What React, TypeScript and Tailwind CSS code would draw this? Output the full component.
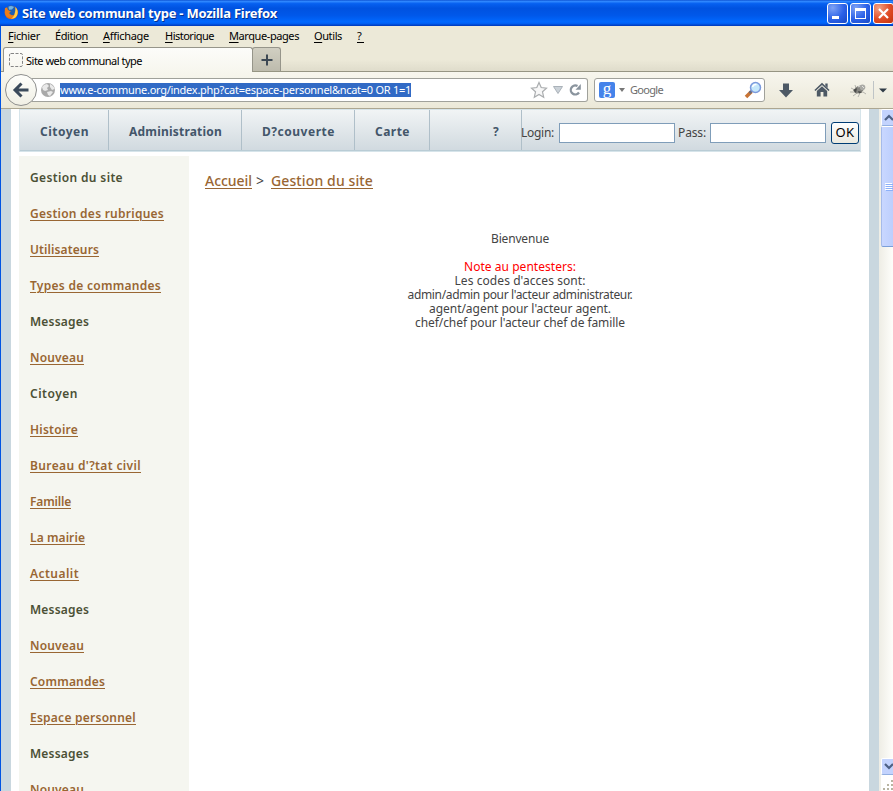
import { useLayoutEffect, useRef, useState, type ReactNode } from "react";

/* Spreads its letters so that the label takes exactly `w` pixels. */
function Fit({ w, className = "", children }: { w: number; className?: string; children: ReactNode }) {
  const ref = useRef<HTMLSpanElement>(null);
  const [spacing, setSpacing] = useState(0);
  useLayoutEffect(() => {
    const el = ref.current;
    if (!el) return;
    el.style.letterSpacing = "0px";
    const n = (el.textContent || "").length;
    const s = (w - el.getBoundingClientRect().width) / n;
    el.style.letterSpacing = s + "px";
    setSpacing(s);
  }, [w]);
  return (
    <span ref={ref} className={"inline-block shrink-0 whitespace-pre " + className} style={{ letterSpacing: spacing }}>
      {children}
    </span>
  );
}

const side: [string, number, boolean][] = [
  ["Gestion du site", 93, false],
  ["Gestion des rubriques", 134, true],
  ["Utilisateurs", 69, true],
  ["Types de commandes", 131, true],
  ["Messages", 59, false],
  ["Nouveau", 54, true],
  ["Citoyen", 48, false],
  ["Histoire", 48, true],
  ["Bureau d'?tat civil", 111, true],
  ["Famille", 41, true],
  ["La mairie", 55, true],
  ["Actualit", 49, true],
  ["Messages", 59, false],
  ["Nouveau", 54, true],
  ["Commandes", 75, true],
  ["Espace personnel", 106, true],
  ["Messages", 59, false],
  ["Nouveau", 54, true],
];

const menus: [string, string, string, number, string][] = [
  ["", "F", "ichier", 32, "ml-[7px]"],
  ["Éditio", "n", "", 33, "ml-[15px]"],
  ["", "A", "ffichage", 46, "ml-[15px]"],
  ["", "H", "istorique", 49, "ml-[16px]"],
  ["", "M", "arque-pages", 70, "ml-[15px]"],
  ["", "O", "utils", 28, "ml-[15px]"],
  ["", "?", "", 7, "ml-[15px]"],
];

function TitleBar() {
  return (
    <header className="flex h-[26px] shrink-0 items-center bg-[linear-gradient(180deg,#0b4fd0_0%,#3189ff_5%,#0660f0_14%,#0052e0_32%,#0058ea_60%,#0068ff_84%,#0060f4_90%,#0037b8_100%)] pl-[4px]">
      <svg width="15" height="16" viewBox="0 0 15 16">
        <circle cx="7.3" cy="7.500" r="6.7" fill="#e06a10" />
        <circle cx="7" cy="5.600" r="5" fill="#1f5fb4" />
        <path d="M4.500 1.800Q7 .3 10 2L8 4.500l-3 .3z" fill="#6fb4e4" />
        <path d="M1 3Q.2 8 2.500 11.500q5 3.500 9.500-1.500Q8.500 11 6.500 9.500L5 8 7 6.500 4 5 3 2.500Z" fill="#ee7d18" />
        <path d="M11.500 2Q15 6 13 10.500 11 14 7 13.800 11.500 11.500 11.500 2" fill="#ffcf4a" />
      </svg>
      <Fit w={255} className="ml-[3px] font-['Noto_Sans'] text-[13px] leading-[26px] font-bold text-white [text-shadow:1px_1px_0_#06318d]">Site web communal type - Mozilla Firefox</Fit>
      <div className="ml-auto flex gap-[2px]">
        <span className="flex size-[21px] items-end rounded-[3px] border border-white bg-[radial-gradient(circle_at_25%_20%,#7da2f5,#2b61e8_55%,#1849c4)] p-1"><i className="h-[3px] w-[7px] bg-white" /></span>
        <span className="flex size-[21px] items-center justify-center rounded-[3px] border border-white bg-[radial-gradient(circle_at_25%_20%,#7da2f5,#2b61e8_55%,#1849c4)]"><i className="h-[11px] w-[11px] border border-t-[3px] border-white" /></span>
        <span className="mr-[-1px] flex size-[21px] items-center justify-center rounded-[3px] border border-white bg-[radial-gradient(circle_at_25%_20%,#f3a083,#e04c26_55%,#c1330d)]">
          <svg width="13" height="13" viewBox="0 0 13 13"><path d="M2 2l9 9M11 2l-9 9" stroke="#fff" strokeWidth="2.200" /></svg>
        </span>
      </div>
    </header>
  );
}

function Toolbar() {
  return (
    <div className="flex h-[37px] shrink-0 items-center border-b border-[#aca691] bg-[linear-gradient(180deg,#f7f6ee,#ebe8d8)]">
      <div className="z-10 ml-[4px] flex size-[32px] shrink-0 items-center justify-center rounded-full border border-[#8e8f8e] bg-[linear-gradient(180deg,#fefefb,#f0efe5)]">
        <svg width="18" height="18" viewBox="0 0 18 18"><path d="M9.500 2.500L3 9l6.500 6.500M3.500 9H16.500" fill="none" stroke="#3b4a5b" strokeWidth="3" /></svg>
      </div>
      <div className="-ml-[5px] flex h-[24px] w-[556px] shrink-0 items-center rounded-r-[3px] border border-l-0 border-[#a0a19b] bg-white pl-[8px]">
        <svg width="16" height="16" viewBox="0 0 16 16">
          <circle cx="8" cy="8" r="7" fill="#a9a9a9" />
          <path d="M2 5Q4 2 7 2L9 4 7 6 8 8 5 9 3 8zM10 2q4 2 4.500 5L12 8l-2-3zM7 10l4-1 2 1-3 4-2-1z" fill="#e9e9e9" />
        </svg>
        <span className="ml-[4px] flex h-[14px] items-center bg-[#316ac5] text-white">
          <Fit w={351} className="text-[11px] leading-[14px]">www.e-commune.org/index.php?cat=espace-personnel&amp;ncat=0 OR 1=1</Fit>
        </span>
        <svg className="ml-[119px] shrink-0" width="18" height="18" viewBox="0 0 18 18"><path d="M9 1.500l2.200 5 5.300.6-4 3.700 1.200 5.400L9 13.500l-4.700 2.700 1.200-5.400-4-3.700 5.300-.6z" fill="#f7f7f7" stroke="#a9acae" strokeWidth="1.200" /></svg>
        <svg className="ml-[5px] shrink-0" width="10" height="8" viewBox="0 0 10 8"><path d="M.5.500h9L5 7.500z" fill="#cbd2d8" stroke="#aab2b9" /></svg>
        <svg className="ml-[5px] shrink-0" width="14" height="14" viewBox="0 0 14 14"><path d="M9.500 3A4.500 4.500 0 1 0 11 9.500" fill="none" stroke="#8a949e" strokeWidth="2.300" /><path d="M7.500 6.800h5.300V1z" fill="#8a949e" /></svg>
      </div>
      <div className="ml-[6px] flex h-[24px] w-[171px] shrink-0 items-center rounded-[3px] border border-[#a0a19b] bg-white pl-[4px]">
        <span className="flex size-[16px] items-center justify-center rounded-[2px] bg-[#4583ea] pb-[4px] font-['Liberation_Serif'] text-[17px] leading-none text-white">g</span>
        <svg className="ml-[4px]" width="6" height="4" viewBox="0 0 6 4"><path d="M0 0h6L3 4z" fill="#777" /></svg>
        <Fit w={33} className="ml-[5px] pt-px text-[11px] text-[#6d6d6d]">Google</Fit>
        <svg className="ml-[81px] shrink-0" width="18" height="18" viewBox="0 0 18 18">
          <path d="M7.500 10.500L2 16" stroke="#c87435" strokeWidth="3.500" />
          <path d="M7.800 9.800L5.500 12" stroke="#626a83" strokeWidth="2.500" />
          <circle cx="11.500" cy="6.500" r="5" fill="#c5e8fb" stroke="#7c9bdd" strokeWidth="1.500" />
          <path d="M8.500 6q1-3 4-2.500" fill="none" stroke="#fff" strokeWidth="1.500" />
        </svg>
      </div>
      <svg className="ml-[14px] shrink-0" width="14" height="15" viewBox="0 0 14 15"><path d="M4 .500h6V7h4l-7 7.500L0 7h4z" fill="#4d5965" /></svg>
      <svg className="ml-[21px] shrink-0" width="16" height="16" viewBox="0 0 17 16"><path d="M1 8.500L8.500 1.500 16 8.500" fill="none" stroke="#4d5965" strokeWidth="1.700" /><path d="M12 1h2.500v5L12 3.500zM3 9l5.500-5L14 9v6h-4v-5H7v5H3z" fill="#4d5965" /></svg>
      <svg className="ml-[20px] shrink-0" width="17" height="15" viewBox="0 0 17 15">
        <path d="M1 5l4 2M0 9h5M3 13l4-3M8 14l2-4M13 9l3 2M6 5L5 2" stroke="#a5a49f" strokeWidth=".8" />
        <ellipse cx="9" cy="6.500" rx="5.500" ry="3.500" transform="rotate(-25 9 6.500)" fill="#858580" />
        <circle cx="12.500" cy="4.200" r="2.800" fill="#aaaaa5" />
        <path d="M3 7l4-2-1 5zM8 8l5 1-4 1.500z" fill="#4a4b49" />
        <path d="M8 4l2-1M12 3l2 2" stroke="#e1e1de" />
      </svg>
      <span className="ml-[6px] h-[18px] w-px shrink-0 bg-[#bfc4c6]" />
      <svg className="ml-[5px] shrink-0" width="8" height="5" viewBox="0 0 8 5"><path d="M0 .5h8L4 4.500z" fill="#2f3b46" /></svg>
    </div>
  );
}

function NavItem({ label, w, cls }: { label: string; w: number; cls: string }) {
  return (
    <div className={"flex h-full shrink-0 items-center border-r border-[#afbfc9] pt-[4px] " + cls}>
      <Fit w={w} className="font-['Noto_Sans'] text-[12px] font-bold text-[#43566a]">{label}</Fit>
    </div>
  );
}

function Scrollbar() {
  return (
    <aside className="flex w-[14px] shrink-0 flex-col overflow-hidden bg-[linear-gradient(90deg,#eeede5,#fefefb)] pl-[2px]">
      <div className="flex h-[17px] w-[15px] shrink-0 items-center justify-center rounded-[2px] border border-white border-b-[#92afe1] bg-[#c3d3fd]">
        <svg width="10" height="7" viewBox="0 0 10 7"><path d="M1 6l4-4 4 4" fill="none" stroke="#4d6185" strokeWidth="2.200" /></svg>
      </div>
      <div className="flex h-[121px] w-[15px] shrink-0 flex-col items-center justify-center gap-px rounded-[2px] border border-white border-b-[#7b9fd9] border-l-[#a5bbea] bg-[linear-gradient(90deg,#c9d7ff,#bacdfc)]">
        {[0, 1, 2, 3].map((i) => <i key={i} className="h-px w-[7px] bg-white shadow-[1px_1px_0_#8cb0f8]" />)}
      </div>
      <div className="mt-auto flex h-[17px] w-[15px] shrink-0 items-center justify-center rounded-[2px] border border-white border-b-[#92afe1] bg-[#c3d3fd]">
        <svg width="10" height="7" viewBox="0 0 10 7"><path d="M1 1l4 4 4-4" fill="none" stroke="#4d6185" strokeWidth="2.200" /></svg>
      </div>
      <div className="h-[16px] shrink-0 bg-white">
        <svg width="13" height="16" viewBox="0 0 13 16"><path d="M10 5h2v2h-2zM6 9h2v2H6zM10 9h2v2h-2zM2 13h2v2H2zM6 13h2v2H6zM10 13h2v2h-2z" fill="#b8b4a2" /></svg>
      </div>
    </aside>
  );
}

export default function App() {
  const link = "text-[#996633] underline underline-offset-[1.5px] decoration-1";
  return (
    <div className="flex h-[791px] w-[893px] flex-col overflow-hidden bg-white font-['Noto_Sans',sans-serif] text-[11px] text-black">
      <TitleBar />
      <div className="flex min-h-0 flex-1 flex-col border-l border-[#0054e3]">
        <div className="flex h-[46px] shrink-0 flex-col border-b border-[#969583] bg-[linear-gradient(180deg,#ece9d8_75%,#dfdccb)]">
          <nav className="flex h-[21px] shrink-0 items-center pb-[2px]">
            {menus.map(([a, u, b, w, m]) => (
              <Fit key={a + u} w={w} className={"leading-[18px] " + m}>{a}<span className="underline underline-offset-2">{u}</span>{b}</Fit>
            ))}
          </nav>
          <div className="flex h-[25px] shrink-0 pl-[2px]">
            <div className="flex h-[25px] w-[250px] items-center rounded-t-[3px] border border-b-0 border-[#96958a] bg-[linear-gradient(180deg,#fcfcfa,#f7f6ee)] pl-[5px]">
              <svg width="14" height="14" viewBox="0 0 14 14"><rect x=".5" y=".5" width="13" height="13" rx="1.500" fill="none" stroke="#858585" strokeDasharray="3 1.500" /></svg>
              <Fit w={116} className="ml-[3px] pt-[2px]">Site web communal type</Fit>
            </div>
            <div className="-ml-px flex h-[24px] w-[29px] items-center justify-center rounded-t-[3px] border border-b-0 border-[#96958a] bg-[linear-gradient(180deg,#d1cfc2,#bdbbad)]">
              <svg width="12" height="12" viewBox="0 0 12 12"><path d="M6 .5v11M.5 6h11" stroke="#3c4854" strokeWidth="2" /></svg>
            </div>
          </div>
        </div>
        <Toolbar />
        <div className="flex min-h-0 flex-1">
          <div className="w-[10px] shrink-0 bg-[#c9d7df]" />
          <main className="flex w-[858px] shrink-0 flex-col px-[8px]">
            <div className="flex h-[43px] w-[842px] shrink-0 border-x border-t border-b border-[#d6e4ea] bg-[linear-gradient(180deg,#f1f4f5,#d0d9df)]">
              <div className="flex w-full items-center border-b border-[#b9ccd5]">
                <NavItem label="Citoyen" w={49} cls="w-[89px] pl-[20px]" />
                <NavItem label="Administration" w={93} cls="w-[133px] pl-[20px]" />
                <NavItem label="D?couverte" w={73} cls="w-[113px] pl-[20px]" />
                <NavItem label="Carte" w={35} cls="w-[75px] pl-[20px]" />
                <NavItem label="?" w={8} cls="w-[92px] pl-[63px]" />
                <div className="flex items-center pt-[5px] text-[12px] text-[#444]">
                  <Fit w={33} className="-ml-px">Login:</Fit>
                  <input className="ml-[5px] h-[20px] w-[116px] border border-[#7f9db9] bg-white" />
                  <Fit w={28} className="ml-[3px]">Pass:</Fit>
                  <input className="ml-[4px] h-[20px] w-[116px] border border-[#7f9db9] bg-white" />
                  <button className="ml-[5px] flex h-[22px] w-[28px] items-center justify-center rounded-[3px] border border-[#003c74] bg-[linear-gradient(180deg,#fff,#ece9df)] text-black"><Fit w={19} className="text-[13px]">OK</Fit></button>
                </div>
              </div>
            </div>
            <div className="mt-[4px] flex min-h-0 flex-1">
              <aside className="flex w-[170px] shrink-0 flex-col overflow-hidden bg-[#f5f6f0] pt-[4px] pl-[11px]">
                {side.map(([t, w, isLink], i) => (
                  <div key={i} className="flex h-[36px] shrink-0 items-center text-[12px] font-semibold">
                    <Fit w={w} className={"leading-[18px] " + (isLink ? link : "text-[#4b5035]")}>{t}</Fit>
                  </div>
                ))}
              </aside>
              <section className="flex w-[662px] flex-col pt-[14px]">
                <div className="flex h-[20px] items-center pl-[16px] text-[14px] font-medium">
                  <Fit w={47} className={link}>Accueil</Fit>
                  <Fit w={12} className="ml-[4px] font-normal text-[#444]">&gt;</Fit>
                  <Fit w={102} className={"ml-[3px] " + link}>Gestion du site</Fit>
                </div>
                <div className="mt-[42px] flex flex-col items-center text-[12px] leading-[14px] text-[#444]">
                  <Fit w={58}>Bienvenue</Fit>
                  <Fit w={112} className="mt-[14px] text-[#f00]">Note au pentesters:</Fit>
                  <Fit w={131}>Les codes d'acces sont:</Fit>
                  <Fit w={225}>admin/admin pour l'acteur administrateur.</Fit>
                  <Fit w={182}>agent/agent pour l'acteur agent.</Fit>
                  <Fit w={210}>chef/chef pour l'acteur chef de famille</Fit>
                </div>
              </section>
            </div>
          </main>
          <div className="w-[10px] shrink-0 bg-[#c9d7df]" />
          <Scrollbar />
        </div>
      </div>
    </div>
  );
}
